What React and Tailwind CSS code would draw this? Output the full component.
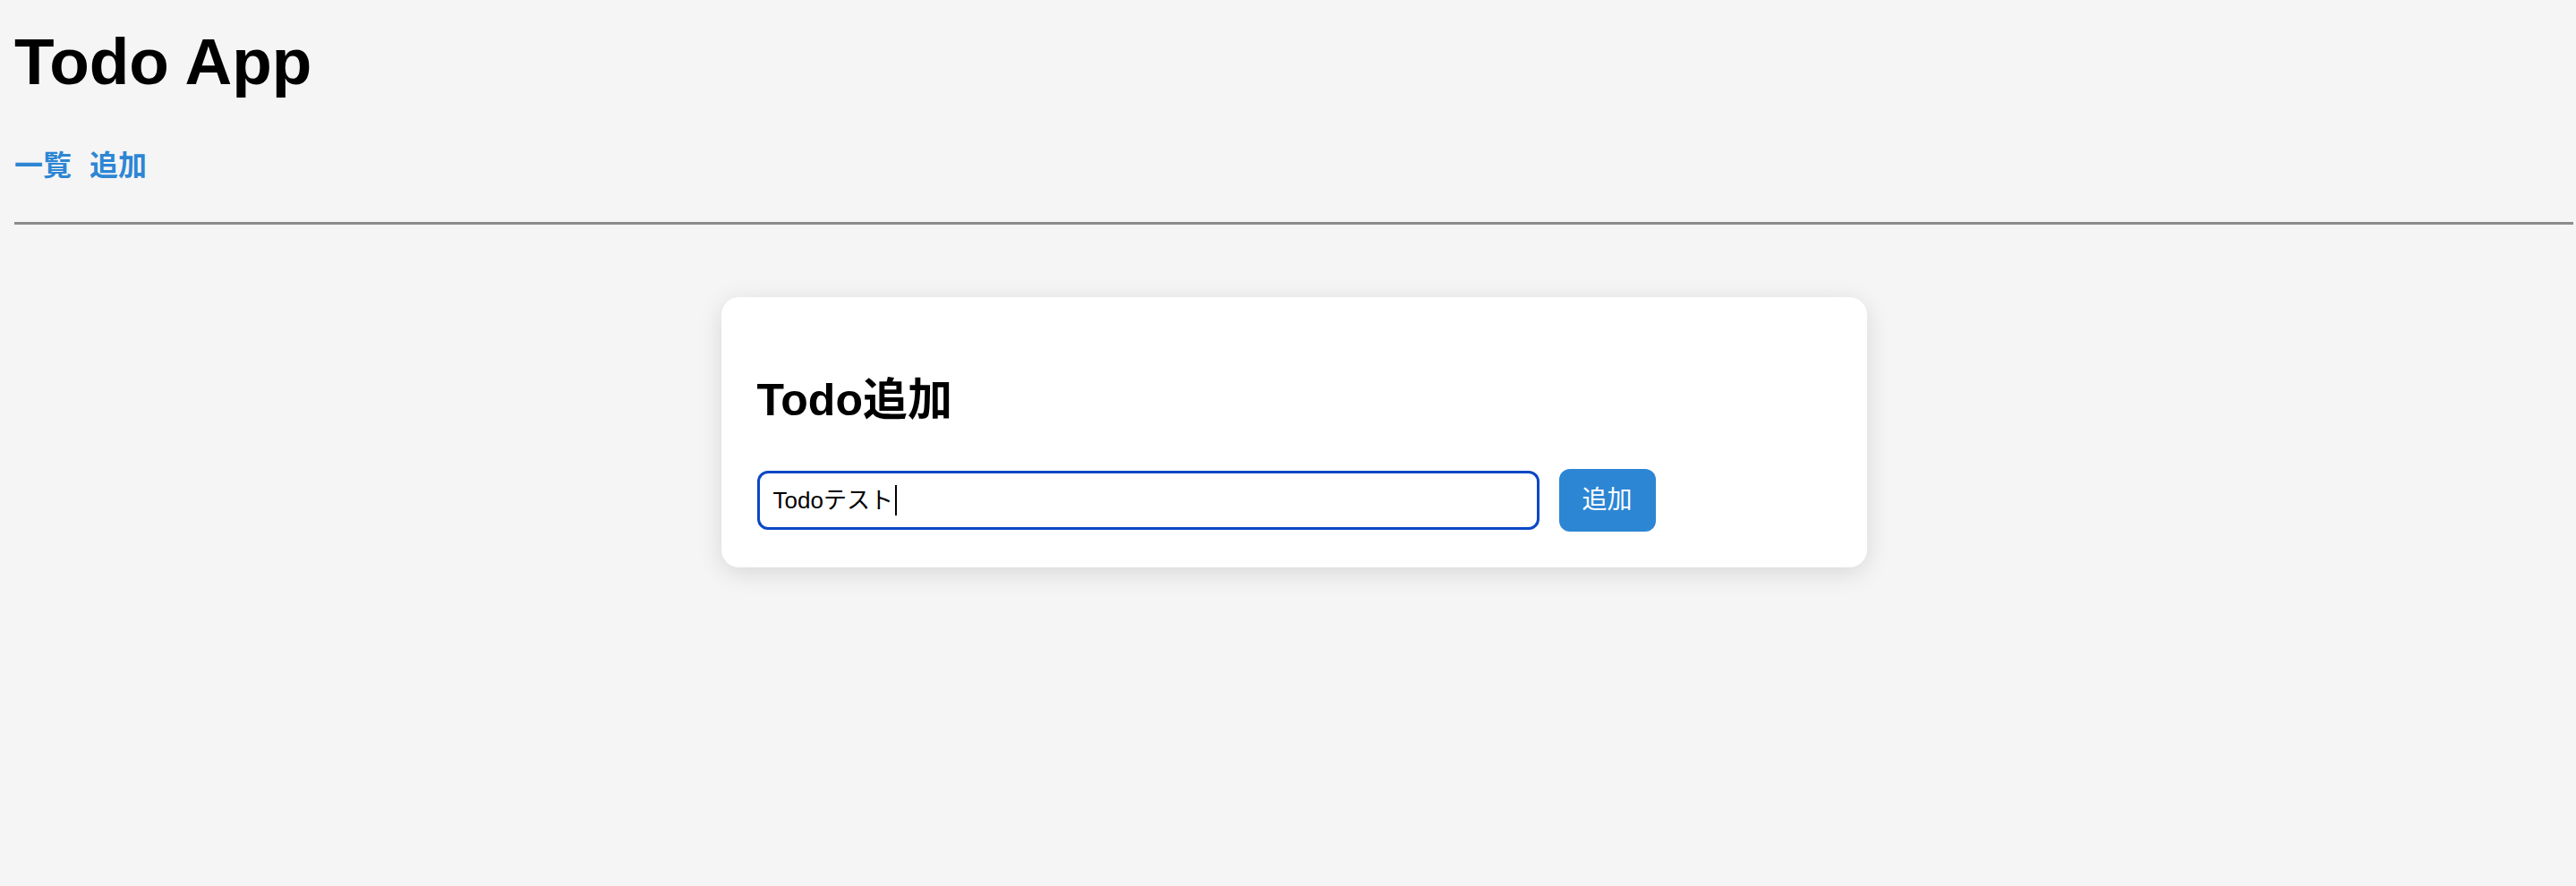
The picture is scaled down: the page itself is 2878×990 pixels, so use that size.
import { useState } from "react";

const font = "font-['Liberation_Sans','Noto_Sans_CJK_JP',sans-serif]";

function Nav() {
    return (
        <nav className="mt-[64px] flex gap-[20px] text-[32px] leading-[32px] font-bold text-[#2d86d4]">
            <a href="#" className="no-underline">一覧</a>
            <a href="#" className="no-underline">追加</a>
        </nav>
    );
}

function AddTodo() {
    const [text] = useState("Todoテスト");

    return (
        <div className="mx-auto mt-[81px] w-[1280px] rounded-[20px] bg-white px-[40px] pt-[40px] pb-[40px] shadow-[0_6px_28px_rgba(0,0,0,0.12)]">
            <h2 className="mt-[47px] text-[50px] leading-[56px] font-bold text-black">Todo追加</h2>
            <div className="mt-[49px] flex items-center gap-[22px]">
                <div className="flex h-[66px] w-[874px] items-center rounded-[12px] border-[3px] border-[#0b48c6] bg-white pl-[15px] text-[26px] text-black">
                    <span>{text}</span>
                    <span className="ml-[2px] h-[34px] w-[2px] bg-black" />
                </div>
                <button className="h-[70px] w-[108px] rounded-[12px] bg-[#2d86d4] text-[28px] text-white">
                    追加
                </button>
            </div>
        </div>
    );
}

export default function App() {
    return (
        <div className={`min-h-screen bg-[#f5f5f5] pl-[16px] pr-[3px] pt-[33px] ${font}`}>
            <h1 className="text-[73px] leading-[72px] font-bold text-black">Todo App</h1>
            <Nav />
            <hr className="mt-[47px] border-t-[3px] border-[#8c8c8c]" />
            <AddTodo />
        </div>
    );
}
